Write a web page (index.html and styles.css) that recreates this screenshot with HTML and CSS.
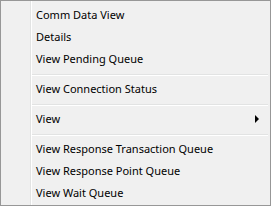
FILE: index.html
```html
<!DOCTYPE html>
<html lang="en">
<head>
    <meta charset="UTF-8">
    <title>Context Menu</title>
    <link rel="stylesheet" href="styles.css">
</head>
<body>
    <div class="menu">
        <div class="item">Comm Data View</div>
        <div class="item">Details</div>
        <div class="item">View Pending Queue</div>
        <div class="separator"></div>
        <div class="item">View Connection Status</div>
        <div class="separator"></div>
        <div class="item has-sub">View</div>
        <div class="separator"></div>
        <div class="item">View Response Transaction Queue</div>
        <div class="item">View Response Point Queue</div>
        <div class="item">View Wait Queue</div>
    </div>
</body>
</html>
```

FILE: styles.css
```css
body {
    margin: 0;
    font-family: "Noto Sans", "DejaVu Sans", sans-serif;
    font-size: 11px;
    color: #000;
}
.menu {
    width: 271px;
    height: 206px;
    box-sizing: border-box;
    border: 1px solid #979797;
    padding: 3px 2px 2px 2px;
    /* gutter line next to the icon column */
    background: linear-gradient(to right, transparent 29px, #e2e3e3 29px, #e2e3e3 30px, #fff 30px, #fff 31px, transparent 31px), #f0f0f0;
}
.item {
    position: relative;
    height: 22px;
    line-height: 22px;
    padding-left: 33px;
    white-space: nowrap;
}
.separator {
    height: 8px;
    box-sizing: border-box;
    padding-top: 4px;
    margin-left: 29px;
}
.separator::before {
    content: "";
    display: block;
    height: 1px;
    background: #e2e3e3;
    border-bottom: 1px solid #fff;
}
/* submenu arrow */
.has-sub::after {
    content: "";
    position: absolute;
    right: 9px;
    top: 7px;
    border-left: 4px solid #000;
    border-top: 4px solid transparent;
    border-bottom: 4px solid transparent;
}
```
